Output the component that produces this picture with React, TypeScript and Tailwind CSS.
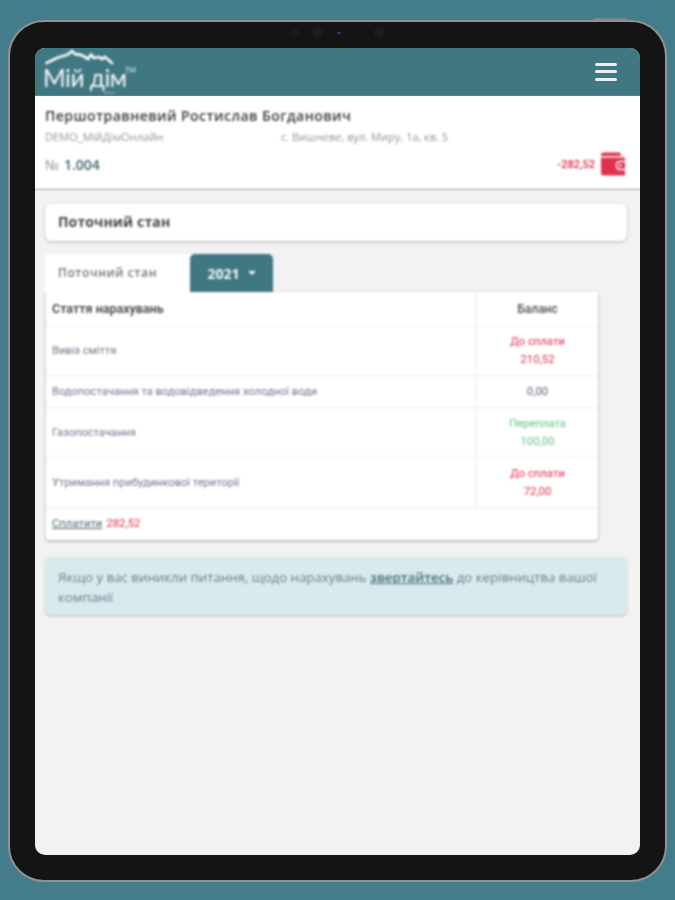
import React from "react";

const sans = "font-['Open_Sans',sans-serif]";
const rob = "font-['Roboto',sans-serif]";

function Logo() {
  return (
    <div className="relative ml-[9px] w-[100px] h-[47px] text-[#f4f8f9] blur-[0.8px]">
      <svg className="absolute left-[0px] top-[0px]" width="72" height="18" viewBox="0 0 72 18" fill="none">
        <path d="M2.5 15 L14 9.5 L24 6.5 L28 3 L31 6 L37 7 L41 9 L44 11 L47 6.5 L50 10 L55 9 L58 11 L61 9 L68 15" stroke="#f4f8f9" strokeWidth="2.8" strokeLinejoin="round" strokeLinecap="round" />
      </svg>
      <span className="absolute left-[-1px] top-[16px] font-['Lato',sans-serif] text-[24.5px] leading-[28px] whitespace-nowrap tracking-[-0.5px]">Мій дім</span>
      <span className="absolute left-[81px] top-[18px] font-['Lato',sans-serif] text-[7px] font-bold leading-[8px] text-[#c3d7da]">TM</span>
      <span className="absolute left-[60px] top-[43px] font-['Lato',sans-serif] text-[4px] leading-[4px] text-[#c3d7da]">online</span>
    </div>
  );
}

function Wallet() {
  return (
    <svg width="25" height="24" viewBox="0 0 25 24" className="block">
      <path d="M1 3 Q1 0.5 3.5 0.5 H19 Q21 0.5 21 2.5 V4 H1 Z" fill="#e0304f" />
      <path d="M1 5.5 H25 V23.5 H3.5 Q1 23.5 1 21 Z" fill="#e0304f" />
      <path d="M25 9.5 H20 Q16.5 9.5 16.5 13.5 Q16.5 17.5 20 17.5 H25" stroke="#ffffff" strokeWidth="1.4" fill="none" />
      <circle cx="20.5" cy="13.5" r="1.3" fill="#ffffff" />
    </svg>
  );
}

type Row = { name: string; label?: string; value: string; color: string; h: string };
const rows: Row[] = [
  { name: "Вивіз сміття", label: "До сплати", value: "210,52", color: "text-[#de2c4c]", h: "h-[50px]" },
  { name: "Водопостачання та водовідведення холодної води", value: "0,00", color: "text-[#5a627a]", h: "h-[32px]" },
  { name: "Газопостачання", label: "Переплата", value: "100,00", color: "text-[#5cc488]", h: "h-[50px]" },
  { name: "Утримання прибудинкової території", label: "До сплати", value: "72,00", color: "text-[#de2c4c]", h: "h-[50px]" },
];

export default function App() {
  return (
    <div className="w-[675px] h-[900px] bg-[#437d8b] pt-[20px] pl-[8px] overflow-hidden">
      <div className="relative w-[659px] h-[862px] rounded-[36px] bg-[#141414] border-2 border-[#8f9293] pt-[26px] pl-[25px]">
        <div className="absolute left-[583px] top-[-4px] w-[34px] h-[2px] rounded-t-sm bg-[#7a8a8f]" />
        <div className="absolute left-[280px] top-[6px] w-[10px] h-[10px] rounded-full bg-[#1a1a1c] blur-[1px]" />
        <div className="absolute left-[302px] top-[5px] w-[11px] h-[11px] rounded-full bg-[#1d1d20] blur-[1px]" />
        <div className="absolute left-[327px] top-[10px] w-[4px] h-[2px] rounded-full bg-[#1c3f8a]" />
        <div className="absolute left-[364px] top-[5px] w-[11px] h-[11px] rounded-full bg-[#1d1d20] blur-[1px]" />

        <div className="w-[605px] h-[807px] rounded-[10px] bg-[#f2f2f2] overflow-hidden flex flex-col">
          <header className="h-[48px] shrink-0 bg-[#3f7783] flex items-center justify-between border-b border-[#4f8794]">
            <Logo />
            <div className="mr-[23px] w-[22px] flex flex-col gap-[4.5px] blur-[0.5px]">
              <div className="h-[3px] rounded-sm bg-[#e8f0f2]" />
              <div className="h-[3px] rounded-sm bg-[#e8f0f2]" />
              <div className="h-[3px] rounded-sm bg-[#e8f0f2]" />
            </div>
          </header>

          <section className="h-[95px] shrink-0 bg-white border-b-[3px] border-[#dedede] pl-[10px] pr-[14px] pt-[10px]">
            <div className="blur-[0.8px]">
              <div className={`${sans} text-[14px] leading-[19px] font-semibold text-[#373c41] tracking-[0.45px] whitespace-nowrap`}>
                Першотравневий Ростислав Богданович
              </div>
              <div className={`${sans} flex mt-[4px] text-[11px] leading-[16px] text-[#8f9498]`}>
                <span className="w-[236px] tracking-[0.08px]">DEMO_МійДімОнлайн</span>
                <span>с. Вишневе, вул. Миру, 1а, кв. 5</span>
              </div>
              <div className="flex items-center justify-between mt-[7px]">
                <div className={`${sans} text-[14px] leading-[20px] text-[#8b9498] mt-[1px]`}>
                  № <span className="font-semibold ml-[1px] text-[#3f646e]">1.004</span>
                </div>
                <div className="flex items-center gap-[5px] mr-[1px]">
                  <span className={`${rob} text-[11px] font-medium text-[#d92545] mt-[3px]`}>-282,52</span>
                  <Wallet />
                </div>
              </div>
            </div>
          </section>

          <div className="pl-[10px] pr-[13px] pt-[13px] blur-[0.8px]">
            <div className={`${sans} h-[37px] bg-white rounded-[6px] shadow-[0_1px_3px_rgba(0,0,0,0.28)] pl-[13px] pb-[2px] flex items-center text-[14px] font-bold text-[#42474b] tracking-[0.15px]`}>
              Поточний стан
            </div>

            <div className="flex items-end mt-[13px] h-[38px]">
              <div className={`${sans} w-[145px] h-[38px] bg-white rounded-tl-[4px] pl-[13px] flex items-center text-[12px] font-semibold text-[#6f7478] tracking-[0.6px]`}>
                Поточний стан
              </div>
              <div className={`${sans} w-[83px] h-[38px] bg-[#3f7783] rounded-t-[5px] flex items-center justify-center gap-[8px] text-[14px] font-bold text-[#f6f9fa]`}>
                2021
                <span className="w-0 h-0 border-x-[4px] border-x-transparent border-t-[4px] border-t-[#f6f9fa]" />
              </div>
            </div>

            <div className={`${rob} ml-[1px] w-[552px] bg-white rounded-b-[3px] shadow-[0_1px_3px_rgba(0,0,0,0.35)]`}>
              <div className="flex h-[34px] border-b border-[#f2f2f2]">
                <div className="flex-1 pl-[6px] pt-[1px] flex items-center text-[12.5px] font-semibold text-[#404347]">Стаття нарахувань</div>
                <div className="w-[122px] border-l border-[#e9e9e9] flex items-center justify-center text-[12px] font-medium text-[#4c4f53]">Баланс</div>
              </div>
              {rows.map((r) => (
                <div key={r.name} className={`flex ${r.h} border-b border-[#ececec]`}>
                  <div className="flex-1 pl-[6px] pt-[1px] flex items-center text-[11.1px] text-[#71768c]">{r.name}</div>
                  <div className={`w-[122px] border-l border-[#ececec] flex flex-col items-center justify-center text-[11.3px] leading-[18px] font-normal ${r.color}`}>
                    {r.label && <span>{r.label}</span>}
                    <span>{r.value}</span>
                  </div>
                </div>
              ))}
              <div className="h-[32px] pl-[6px] flex items-center gap-[4px] text-[11.3px] font-normal">
                <span className="underline text-[#46626a]">Сплатити</span>
                <span className="text-[#de2c4c]">282,52</span>
              </div>
            </div>

            <div className={`${sans} mt-[17px] h-[58px] bg-[#d9eaef] rounded-[5px] shadow-[0_1px_2px_rgba(0,0,0,0.25)] pl-[13px] pr-[20px] pt-[10px] text-[13.25px] leading-[20px] text-[#637f88]`}>
              Якщо у вас виникли питання, щодо нарахувань <span className="underline font-semibold text-[#466771]">звертайтесь</span> до керівництва вашої компанії
            </div>
          </div>
        </div>
      </div>
    </div>
  );
}
